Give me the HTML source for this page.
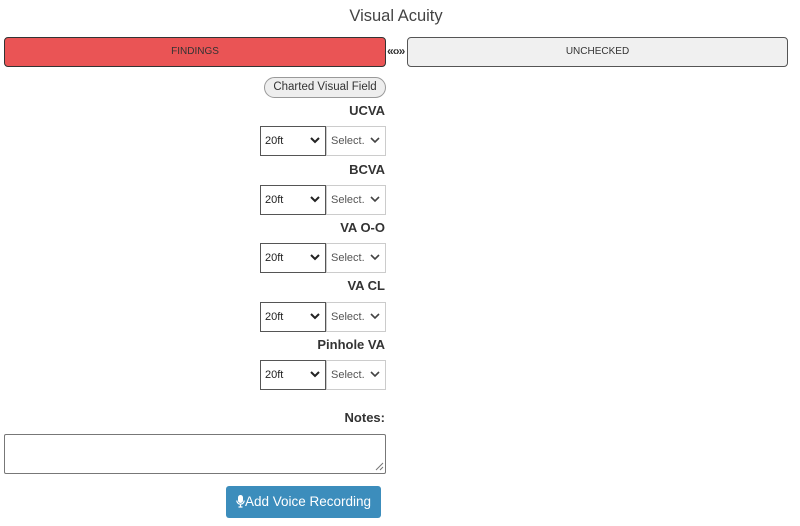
<!DOCTYPE html>
<html><head><style>
body{margin:0;width:800px;height:526px;background:#fff;font-family:"Liberation Sans",sans-serif;color:#333;position:relative;overflow:hidden}
.a{position:absolute}
.lbl{position:absolute;right:415px;font-weight:bold;font-size:13px;color:#333}
.s1,.s2{position:absolute;height:30px;box-sizing:border-box;font-size:11px;display:flex;align-items:center;padding-left:4px}
.s1{left:260px;width:66px;border:1px solid #555;color:#222}
.s2{left:326px;width:60px;border:1px solid #ccc;color:#555}
.chev{position:absolute;right:5px;top:9px;width:10px;height:8px}
</style></head><body>
<div class="a" style="left:0;width:792px;top:7px;text-align:center;font-size:16.5px;color:#444">Visual Acuity</div>
<div class="a" style="left:4px;top:37px;width:382px;height:30px;box-sizing:border-box;background:#ea5455;border:1px solid #333;border-radius:4px;font-size:10px;text-align:center;line-height:28px;color:#333">FINDINGS</div>
<div class="a" style="left:387px;top:44px;font-size:12px;font-weight:bold;color:#333;letter-spacing:-1px">«‹›»</div>
<div class="a" style="left:407px;top:37px;width:381px;height:30px;box-sizing:border-box;background:#f0f0f0;border:1px solid #555;border-radius:4px;font-size:10px;text-align:center;line-height:28px;color:#333">UNCHECKED</div>
<div class="a" style="left:264px;top:77px;width:122px;height:21px;box-sizing:border-box;background:#eee;border:1px solid #999;border-radius:11px;font-size:11.5px;text-align:center;line-height:19px;color:#333">Charted Visual Field</div>

<div class="lbl" style="top:103px">UCVA</div>
<div class="s1" style="top:126px">20ft<svg class="chev" viewBox="0 0 10 8"><path d="M1 2l4 4 4-4" stroke="#222" stroke-width="2" fill="none"/></svg></div>
<div class="s2" style="top:126px">Select.<svg class="chev" viewBox="0 0 10 8"><path d="M1 2l4 4 4-4" stroke="#444" stroke-width="1.6" fill="none"/></svg></div>

<div class="lbl" style="top:162px">BCVA</div>
<div class="s1" style="top:185px">20ft<svg class="chev" viewBox="0 0 10 8"><path d="M1 2l4 4 4-4" stroke="#222" stroke-width="2" fill="none"/></svg></div>
<div class="s2" style="top:185px">Select.<svg class="chev" viewBox="0 0 10 8"><path d="M1 2l4 4 4-4" stroke="#444" stroke-width="1.6" fill="none"/></svg></div>

<div class="lbl" style="top:220px">VA O-O</div>
<div class="s1" style="top:243px">20ft<svg class="chev" viewBox="0 0 10 8"><path d="M1 2l4 4 4-4" stroke="#222" stroke-width="2" fill="none"/></svg></div>
<div class="s2" style="top:243px">Select.<svg class="chev" viewBox="0 0 10 8"><path d="M1 2l4 4 4-4" stroke="#444" stroke-width="1.6" fill="none"/></svg></div>

<div class="lbl" style="top:278px">VA CL</div>
<div class="s1" style="top:302px">20ft<svg class="chev" viewBox="0 0 10 8"><path d="M1 2l4 4 4-4" stroke="#222" stroke-width="2" fill="none"/></svg></div>
<div class="s2" style="top:302px">Select.<svg class="chev" viewBox="0 0 10 8"><path d="M1 2l4 4 4-4" stroke="#444" stroke-width="1.6" fill="none"/></svg></div>

<div class="lbl" style="top:337px">Pinhole VA</div>
<div class="s1" style="top:360px">20ft<svg class="chev" viewBox="0 0 10 8"><path d="M1 2l4 4 4-4" stroke="#222" stroke-width="2" fill="none"/></svg></div>
<div class="s2" style="top:360px">Select.<svg class="chev" viewBox="0 0 10 8"><path d="M1 2l4 4 4-4" stroke="#444" stroke-width="1.6" fill="none"/></svg></div>

<div class="lbl" style="top:410px">Notes:</div>
<div class="a" style="left:4px;top:434px;width:382px;height:40px;box-sizing:border-box;border:1px solid #777;border-radius:2px"></div>
<svg class="a" style="left:375px;top:462px" width="9" height="9"><path d="M1 8L8 1M5 8L8 5" stroke="#777" stroke-width="1"/></svg>
<div class="a" style="left:226px;top:486px;width:155px;height:32px;background:#3c8dbc;border-radius:3px;color:#fff;font-size:13.5px;line-height:32px;text-align:center">
<svg width="9" height="13" viewBox="0 0 9 13" style="vertical-align:-2px"><rect x="2" y="0" width="5" height="8" rx="2.5" fill="#fff"/><path d="M0.8 5.5a3.7 3.7 0 0 0 7.4 0M4.5 9.5v2.5M2.5 12h4" stroke="#fff" stroke-width="1.2" fill="none"/></svg>Add Voice Recording</div>
</body></html>
